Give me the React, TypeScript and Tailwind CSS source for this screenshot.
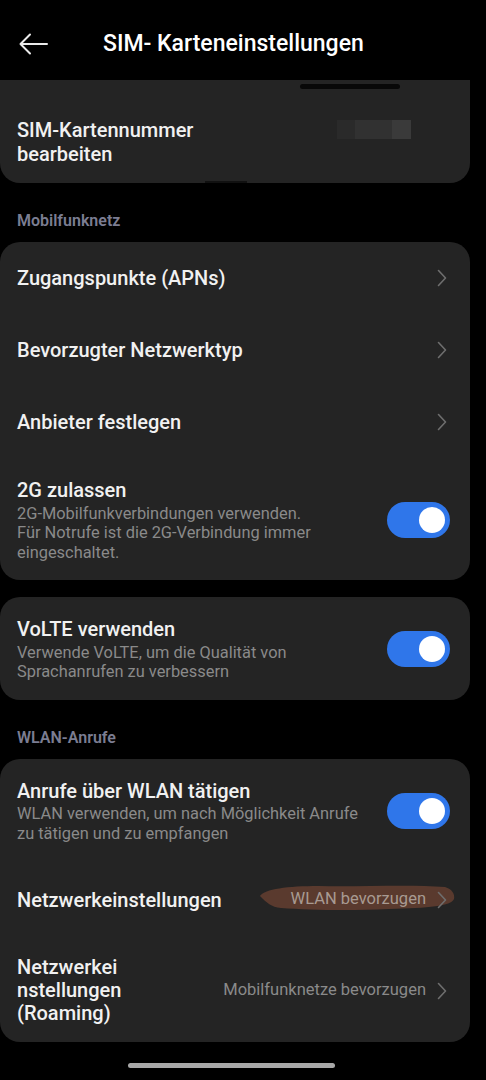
import React from "react";

const font = { fontFamily: "Roboto, 'Noto Sans', sans-serif" };

function Chevron() {
  return (
    <svg width="10" height="18" viewBox="0 0 10 18" className="shrink-0">
      <polyline points="1.5,1.5 8.5,9 1.5,16.5" fill="none" stroke="#6e6e6e" strokeWidth="1.6" strokeLinecap="round" strokeLinejoin="round" />
    </svg>
  );
}

function Toggle() {
  return (
    <div className="w-[63px] h-[36px] rounded-full bg-[#2f76ea] flex items-center justify-end pr-[5px] shrink-0">
      <div className="w-[26px] h-[26px] rounded-full bg-white" />
    </div>
  );
}

function NavRow({ title }: { title: string }) {
  return (
    <div className="h-[72px] flex items-center justify-between pl-[17px] pr-[23px]">
      <span className="text-[20px] leading-[24px] font-medium text-[#f1f1f1]">{title}</span>
      <Chevron />
    </div>
  );
}

function ToggleRow({ title, sub, className = "" }: { title: string; sub: React.ReactNode; className?: string }) {
  return (
    <div className={`flex items-center justify-between pl-[17px] pr-[20px] ${className}`}>
      <div className="flex flex-col">
        <span className="text-[20px] leading-[24px] text-[#f1f1f1] font-medium">{title}</span>
        <span className="text-[16.4px] leading-[19.5px] text-[#8a8a8a] mt-[1.5px]">{sub}</span>
      </div>
      <Toggle />
    </div>
  );
}

function SectionLabel({ text }: { text: string }) {
  return <div className="mt-[28px] mb-[11px] pl-[17px] text-[16px] leading-[20px] font-semibold text-[#7b7d92]">{text}</div>;
}

export default function App() {
  return (
    <div className="w-[486px] h-[1080px] bg-black overflow-hidden" style={font}>
      {/* Header */}
      <div className="h-20 flex items-center pt-2 pl-[18px]">
        <svg width="30" height="22" viewBox="0 0 30 22">
          <path d="M29 11H2.5M12 1.5L2.5 11l9.5 9.5" fill="none" stroke="#eaeaea" strokeWidth="2" strokeLinecap="round" strokeLinejoin="round" />
        </svg>
        <h1 className="ml-[55px] text-[23px] font-medium text-white">SIM- Karteneinstellungen</h1>
      </div>

      <div className="w-[470px]">
        {/* Card 1 */}
        <div className="relative bg-[#242424] rounded-b-[20px] pt-[38px] pb-[17px] pl-[17px] flex items-center">
          <div className="absolute left-[300px] top-[4px] w-[100px] h-[5px] rounded-full bg-[#080808]" />
          <div className="absolute left-[205px] bottom-0 w-[42px] h-[2px] bg-[#111]" />
          <span className="text-[20px] leading-[24px] text-[#f1f1f1] font-medium w-[200px]">
            SIM-Kartennummer bearbeiten
          </span>
          <div className="ml-[120px] flex h-[19px] -mt-[26px]">
            <div className="w-[18px] bg-[#2a2a2a]" />
            <div className="w-[37px] bg-[#313131]" />
            <div className="w-[19px] bg-[#3a3a3a]" />
          </div>
        </div>

        <SectionLabel text="Mobilfunknetz" />

        <div className="bg-[#242424] rounded-[20px]">
          <NavRow title="Zugangspunkte (APNs)" />
          <NavRow title="Bevorzugter Netzwerktyp" />
          <NavRow title="Anbieter festlegen" />
          <ToggleRow
            className="pt-5 pb-[18px]"
            title="2G zulassen"
            sub={<>2G-Mobilfunkverbindungen verwenden.<br />Für Notrufe ist die 2G-Verbindung immer<br />eingeschaltet.</>}
          />
        </div>

        <div className="bg-[#242424] rounded-[20px] mt-[17px]">
          <ToggleRow
            className="pt-5 pb-[18px]"
            title="VoLTE verwenden"
            sub={<>Verwende VoLTE, um die Qualität von<br />Sprachanrufen zu verbessern</>}
          />
        </div>

        <SectionLabel text="WLAN-Anrufe" />

        <div className="bg-[#242424] rounded-[20px] pb-[17px]">
          <ToggleRow
            className="pt-5 pb-[18px]"
            title="Anrufe über WLAN tätigen"
            sub={<>WLAN verwenden, um nach Möglichkeit Anrufe<br />zu tätigen und zu empfangen</>}
          />
          <div className="h-[77px] flex items-center justify-between pl-[17px] pr-[23px]">
            <span className="text-[20px] leading-[24px] font-medium text-[#f1f1f1]">Netzwerkeinstellungen</span>
            <div className="relative flex items-center gap-[11px]">
              <svg className="absolute -left-[32px] -top-[6px]" width="198" height="32" viewBox="0 0 198 32">
                <path d="M1 15 C6 8 28 5 60 5 C100 6 150 3 186 6 C193 8 196 13 195 18 C192 25 170 27 130 28 C90 30 50 29 22 27 C12 26 8 22 1 15 Z" fill="#5a3a2e" />
              </svg>
              <span className="relative text-[16.5px] text-[#a89a92]">WLAN bevorzugen</span>
              <span className="relative"><Chevron /></span>
            </div>
          </div>
          <div className="pt-[18px] flex items-center justify-between pl-[17px] pr-[23px]">
            <span className="text-[20px] leading-[23px] font-medium text-[#f1f1f1]">
              Netzwerkei<br />nstellungen<br />(Roaming)
            </span>
            <div className="flex items-center gap-[11px]">
              <span className="text-[16.5px] text-[#8a8a8a]">Mobilfunknetze bevorzugen</span>
              <Chevron />
            </div>
          </div>
        </div>
      </div>

      <div className="mt-[21px] ml-[128px] w-[207px] h-[5px] rounded-full bg-[#a8a8a8]" />
    </div>
  );
}
